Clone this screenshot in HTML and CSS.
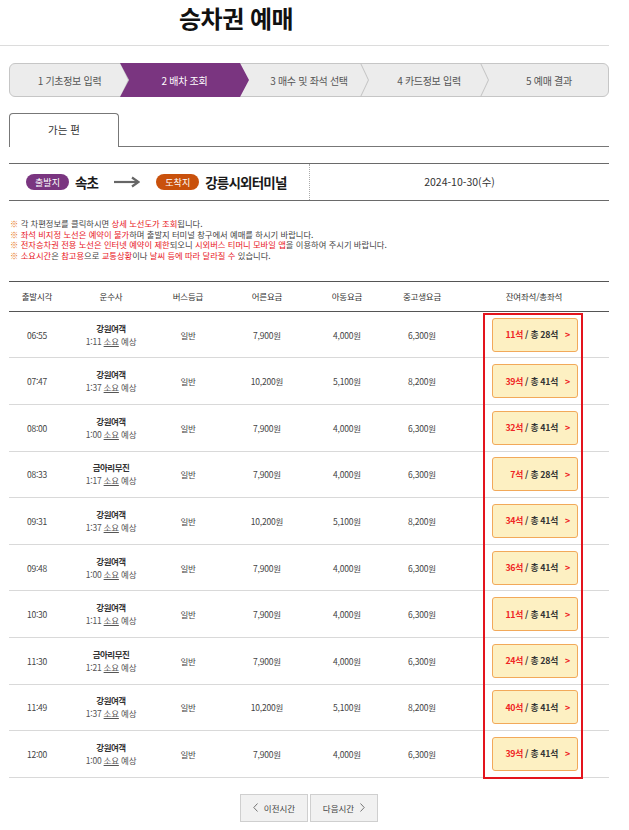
FILE: index.html
```html
<!DOCTYPE html>
<html lang="ko">
<head>
<meta charset="utf-8">
<title>승차권 예매</title>
<link rel="stylesheet" href="styles.css">
</head>
<body>
<div class="page">
  <header class="title-bar"><h1 class="title">승차권 예매</h1></header>

  <ol class="steps">
    <li class="step"><span>1 기초정보 입력</span><svg class="sep" viewBox="0 0 9 33" preserveAspectRatio="none"><polyline points="0.5,0 8.5,16.5 0.5,33" /></svg></li>
    <li class="step active"><span>2 배차 조회</span></li>
    <li class="step"><span>3 매수 및 좌석 선택</span><svg class="sep" viewBox="0 0 9 33" preserveAspectRatio="none"><polyline points="0.5,0 8.5,16.5 0.5,33" /></svg></li>
    <li class="step"><span>4 카드정보 입력</span><svg class="sep" viewBox="0 0 9 33" preserveAspectRatio="none"><polyline points="0.5,0 8.5,16.5 0.5,33" /></svg></li>
    <li class="step"><span>5 예매 결과</span></li>
  </ol>

  <div class="tabs">
    <div class="tab">가는 편</div>
    <div class="tab-line"></div>
  </div>

  <div class="route">
    <div class="route-left">
      <span class="badge badge-dep">출발지</span>
      <span class="place">속초</span>
      <svg class="route-arrow" viewBox="0 0 26 12"><line x1="0" y1="6" x2="24" y2="6" /><polyline points="18,1.5 24.5,6 18,10.5" /></svg>
      <span class="badge badge-arr">도착지</span>
      <span class="place">강릉시외터미널</span>
    </div>
    <div class="route-date">2024-10-30(수)</div>
  </div>

  <ul class="notes">
    <li><i>※</i> 각 차편정보를 클릭하시면 <em>상세 노선도가 조회</em>됩니다.</li>
    <li><i>※</i> <em>좌석 비지정 노선은 예약이 불가</em>하며 출발지 터미널 창구에서 예매를 하시기 바랍니다.</li>
    <li><i>※</i> <em>전자승차권 전용 노선은 인터넷 예약이 제한</em>되오니 <em>시외버스 티머니 모바일 앱</em>을 이용하여 주시기 바랍니다.</li>
    <li><i>※</i> <em>소요시간</em>은 <em>참고용</em>으로 <em>교통상황</em>이나 <em>날씨 등에 따라 달라질 수</em> 있습니다.</li>
  </ul>

  <div class="table">
    <div class="row head">
      <div>출발시각</div><div>운수사</div><div>버스등급</div><div>어른요금</div><div>아동요금</div><div>중고생요금</div><div class="c7">잔여좌석/총좌석</div>
    </div>
    <div class="row"><div>06:55</div><div class="co"><b>강원여객</b><span>1:11 <u>소요</u> 예상</span></div><div>일반</div><div>7,900원</div><div>4,000원</div><div>6,300원</div><div class="c7"><button class="seat"><em>11석</em> / 총 28석 <i>&gt;</i></button></div></div>
    <div class="row"><div>07:47</div><div class="co"><b>강원여객</b><span>1:37 <u>소요</u> 예상</span></div><div>일반</div><div>10,200원</div><div>5,100원</div><div>8,200원</div><div class="c7"><button class="seat"><em>39석</em> / 총 41석 <i>&gt;</i></button></div></div>
    <div class="row"><div>08:00</div><div class="co"><b>강원여객</b><span>1:00 <u>소요</u> 예상</span></div><div>일반</div><div>7,900원</div><div>4,000원</div><div>6,300원</div><div class="c7"><button class="seat"><em>32석</em> / 총 41석 <i>&gt;</i></button></div></div>
    <div class="row"><div>08:33</div><div class="co"><b>금아리무진</b><span>1:17 <u>소요</u> 예상</span></div><div>일반</div><div>7,900원</div><div>4,000원</div><div>6,300원</div><div class="c7"><button class="seat"><em>7석</em> / 총 28석 <i>&gt;</i></button></div></div>
    <div class="row"><div>09:31</div><div class="co"><b>강원여객</b><span>1:37 <u>소요</u> 예상</span></div><div>일반</div><div>10,200원</div><div>5,100원</div><div>8,200원</div><div class="c7"><button class="seat"><em>34석</em> / 총 41석 <i>&gt;</i></button></div></div>
    <div class="row"><div>09:48</div><div class="co"><b>강원여객</b><span>1:00 <u>소요</u> 예상</span></div><div>일반</div><div>7,900원</div><div>4,000원</div><div>6,300원</div><div class="c7"><button class="seat"><em>36석</em> / 총 41석 <i>&gt;</i></button></div></div>
    <div class="row"><div>10:30</div><div class="co"><b>강원여객</b><span>1:11 <u>소요</u> 예상</span></div><div>일반</div><div>7,900원</div><div>4,000원</div><div>6,300원</div><div class="c7"><button class="seat"><em>11석</em> / 총 41석 <i>&gt;</i></button></div></div>
    <div class="row"><div>11:30</div><div class="co"><b>금아리무진</b><span>1:21 <u>소요</u> 예상</span></div><div>일반</div><div>7,900원</div><div>4,000원</div><div>6,300원</div><div class="c7"><button class="seat"><em>24석</em> / 총 28석 <i>&gt;</i></button></div></div>
    <div class="row"><div>11:49</div><div class="co"><b>강원여객</b><span>1:37 <u>소요</u> 예상</span></div><div>일반</div><div>10,200원</div><div>5,100원</div><div>8,200원</div><div class="c7"><button class="seat"><em>40석</em> / 총 41석 <i>&gt;</i></button></div></div>
    <div class="row"><div>12:00</div><div class="co"><b>강원여객</b><span>1:00 <u>소요</u> 예상</span></div><div>일반</div><div>7,900원</div><div>4,000원</div><div>6,300원</div><div class="c7"><button class="seat"><em>39석</em> / 총 41석 <i>&gt;</i></button></div></div>
    <div class="highlight"></div>
  </div>

  <div class="pager">
    <button class="pg"><svg class="chev" viewBox="0 0 5 9"><polyline points="4.5,0.5 0.8,4.5 4.5,8.5" /></svg>이전시간</button>
    <button class="pg">다음시간<svg class="chev" viewBox="0 0 5 9"><polyline points="0.5,0.5 4.2,4.5 0.5,8.5" /></svg></button>
  </div>
</div>
</body>
</html>
```

FILE: styles.css
```css
* { box-sizing: border-box; }
html, body { margin: 0; padding: 0; background: #fff; }
body {
  font-family: "Noto Sans CJK KR", "Noto Sans", sans-serif;
  color: #333;
  width: 629px;
}
.page { width: 609px; }

.title-bar {
  height: 46px;
  border-bottom: 1px solid #dcdcdc;
  padding: 3px 0 0 179px;
}
.title {
  margin: 0;
  font-size: 24px;
  line-height: 30px;
  font-weight: 700;
  color: #111;
  letter-spacing: -0.5px;
}

/* steps */
.steps {
  list-style: none;
  margin: 17px 0 0 9px;
  padding: 0;
  width: 600px;
  height: 34px;
  display: flex;
  background: #ececec;
  border: 1px solid #c6c6c6;
  border-radius: 6px;
}
.step {
  flex: 0 0 120px;
  position: relative;
  display: flex;
  align-items: center;
  justify-content: center;
  font-size: 10px;
  color: #555;
  letter-spacing: -0.3px;
}
.step:first-child { flex-basis: 119px; }
.step span { position: relative; z-index: 1; }
.step .sep {
  position: absolute;
  right: 0;
  top: -1px;
  width: 9px;
  height: 34px;
}
.step .sep polyline { fill: none; stroke: #c6c6c6; stroke-width: 1; }
.step.active { color: #fff; padding-right: 9px; }
.step.active::before {
  content: "";
  position: absolute;
  top: -1px;
  bottom: -1px;
  left: -9px;
  right: 0;
  background: #7a3580;
  clip-path: polygon(0 0, calc(100% - 9px) 0, 100% 50%, calc(100% - 9px) 100%, 0 100%, 9px 50%);
}

/* tabs */
.tabs {
  display: flex;
  align-items: flex-end;
  margin: 16px 0 0 9px;
  height: 34px;
}
.tab {
  width: 110px;
  height: 34px;
  border: 1px solid #777;
  border-bottom: none;
  border-radius: 4px 4px 0 0;
  font-size: 10.5px;
  color: #333;
  display: flex;
  align-items: center;
  justify-content: center;
  padding-bottom: 2px;
}
.tab-line { flex: 1; border-bottom: 1px solid #777; }

/* route */
.route {
  margin: 16px 0 0 9px;
  height: 38px;
  border-top: 1px solid #6a6a6a;
  border-bottom: 1px solid #6a6a6a;
  display: flex;
}
.route-left {
  width: 301px;
  border-right: 1px dotted #aaa;
  display: flex;
  align-items: center;
  padding-left: 17px;
}
.badge {
  display: inline-flex;
  align-items: center;
  justify-content: center;
  width: 43px;
  height: 16px;
  border-radius: 8px;
  color: #fff;
  font-size: 9px;
}
.badge-dep { background: #7a3580; }
.badge-arr { background: #c9510c; }
.place {
  font-size: 13.5px;
  font-weight: 700;
  color: #1a1a1a;
  margin-left: 6px;
  letter-spacing: -0.8px;
}
.route-arrow { width: 26px; height: 12px; margin: 0 16px 0 16px; }
.route-arrow line, .route-arrow polyline { fill: none; stroke: #666; stroke-width: 2.2; }
.route-date {
  flex: 1;
  display: flex;
  align-items: center;
  justify-content: center;
  font-size: 10.5px;
  color: #333;
  padding-bottom: 2px;
}

/* notes */
.notes {
  list-style: none;
  margin: 17px 0 0 10px;
  padding: 0;
  font-size: 8.3px;
  line-height: 10.7px;
  color: #444;
  letter-spacing: 0;
}
.notes i { font-style: normal; color: #e8781e; }
.notes em { font-style: normal; color: #e8141c; }

/* table */
.table {
  position: relative;
  margin: 20px 0 0 9px;
  width: 600px;
  border-top: 1px solid #555;
}
.row {
  display: grid;
  grid-template-columns: 56px 92px 62px 96px 64px 86px 144px;
  align-items: center;
  text-align: center;
  height: 46.6px;
  border-bottom: 1px solid #d9d9d9;
  font-size: 8.5px;
  color: #444;
  letter-spacing: -0.2px;
}
.row:last-of-type { border-bottom-color: #666; }
.row.head {
  height: 30px;
  border-bottom: 1px solid #555;
  color: #333;
  font-size: 8.5px;
}
.co { display: flex; flex-direction: column; align-items: center; line-height: 13px; }
.co b { font-weight: 700; color: #333; letter-spacing: -0.5px; }
.co span { color: #555; }
.co u { text-decoration: underline; text-underline-offset: 1px; }
.row .c7 { display: flex; justify-content: flex-start; padding-left: 27px; }
.row.head .c7 { display: block; padding-left: 0; padding-right: 6px; }

.seat {
  width: 86px;
  height: 34px;
  border: 1px solid #f2a95a;
  border-radius: 3px;
  background: #fdf0c2;
  font-family: inherit;
  font-size: 8.8px;
  font-weight: 700;
  color: #333;
  display: flex;
  align-items: center;
  justify-content: flex-end;
  padding: 0 7px 0 0;
  letter-spacing: -0.3px;
  white-space: pre;
}
.seat em { font-style: normal; color: #ef2525; }
.seat i { font-style: normal; color: #ef2525; margin-left: 5px; }

.highlight {
  position: absolute;
  left: 474px;
  top: 31px;
  width: 100px;
  bottom: -1px;
  border: 2px solid #e3141d;
  pointer-events: none;
}

/* pager */
.pager {
  margin: 16px 0 0 9px;
  width: 600px;
  display: flex;
  justify-content: center;
  gap: 2px;
}
.pg {
  height: 28px;
  width: 68px;
  background: #f1f1f1;
  border: 1px solid #cfcfcf;
  font-family: inherit;
  font-size: 8.5px;
  color: #444;
  display: inline-flex;
  align-items: center;
  justify-content: center;
  gap: 6px;
  padding: 0;
}
.chev { width: 5px; height: 9px; }
.chev polyline { fill: none; stroke: #666; stroke-width: 0.9; }
```
